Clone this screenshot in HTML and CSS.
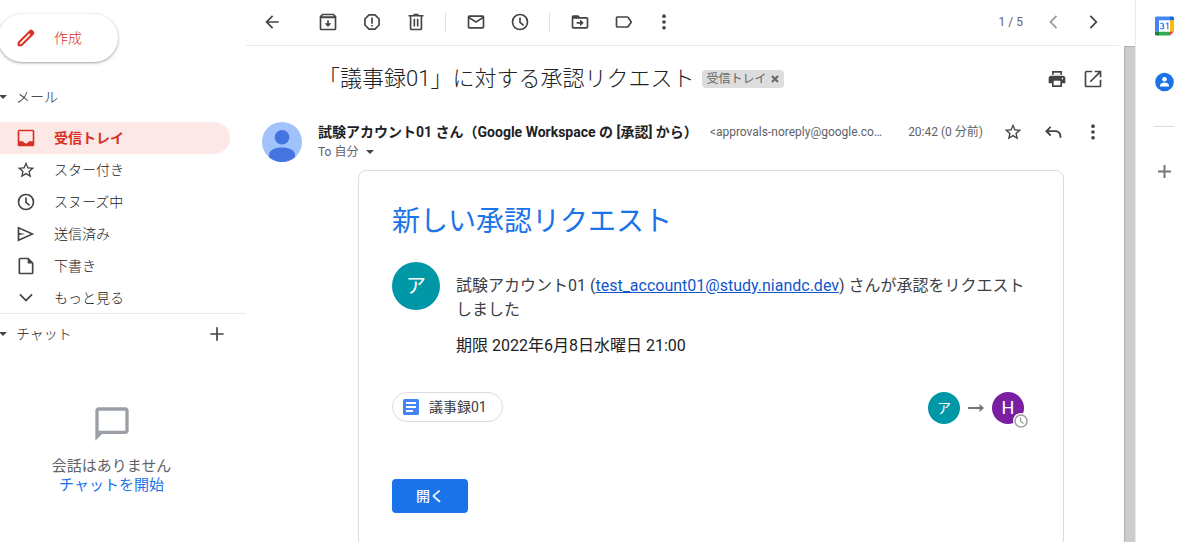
FILE: index.html
```html
<!DOCTYPE html>
<html lang="ja">
<head>
<meta charset="utf-8">
<meta name="viewport" content="width=device-width, initial-scale=1">
<title>「議事録01」に対する承認リクエスト</title>
<link rel="stylesheet" href="styles.css">
</head>
<body>
<svg class="sprite" aria-hidden="true">
  <symbol id="i-star" viewBox="0 0 24 24"><path d="M22 9.24l-7.19-.62L12 2 9.19 8.63 2 9.24l5.46 4.73L5.82 21 12 17.27 18.18 21l-1.63-7.03L22 9.24zM12 15.4l-3.76 2.27 1-4.28-3.32-2.88 4.38-.38L12 6.1l1.71 4.04 4.38.38-3.32 2.88 1 4.28L12 15.4z"/></symbol>
  <symbol id="i-clock" viewBox="0 0 24 24"><path d="M12 2a10 10 0 1 0 0 20 10 10 0 0 0 0-20zm0 18a8 8 0 1 1 0-16 8 8 0 0 1 0 16zM13 6.500h-2V13l4.700 3.700 1.200-1.500L13 12z"/></symbol>
  <symbol id="i-more" viewBox="0 0 24 24"><circle cx="12" cy="5" r="2.200"/><circle cx="12" cy="12" r="2.200"/><circle cx="12" cy="19" r="2.200"/></symbol>
  <symbol id="i-plus" viewBox="0 0 24 24"><path d="M20 13h-7v7h-2v-7H4v-2h7V4h2v7h7z"/></symbol>
</svg>
<div class="app">
  <aside class="sidebar">
    <button class="compose" type="button">
      <svg class="icon" viewBox="0 0 24 24" aria-hidden="true"><path fill-rule="evenodd" d="M2 22v-5L16.300 2.700a2.500 2.500 0 0 1 3.500 0l1.500 1.500a2.500 2.500 0 0 1 0 3.500L7 22zm2.500-2.500H6L17.300 8.200l-1.500-1.500L4.500 18z"/></svg>
      作成
    </button>
    <button class="section-head" type="button"><span class="caret"></span>メール</button>
    <nav class="folders">
      <a class="folder active" href="#"><svg class="icon" viewBox="0 0 24 24" aria-hidden="true"><path fill-rule="evenodd" d="M4 2h16a2 2 0 0 1 2 2v16a2 2 0 0 1-2 2H4a2 2 0 0 1-2-2V4a2 2 0 0 1 2-2zm0 2v12h4.500c.6 1.500 2 2.500 3.500 2.500s2.900-1 3.500-2.500H20V4z"/></svg>受信トレイ</a>
      <a class="folder" href="#"><svg class="icon" aria-hidden="true"><use href="#i-star"/></svg>スター付き</a>
      <a class="folder" href="#"><svg class="icon" aria-hidden="true"><use href="#i-clock"/></svg>スヌーズ中</a>
      <a class="folder" href="#"><svg class="icon" viewBox="0 0 24 24" aria-hidden="true"><path fill-rule="evenodd" d="M2 3l20 9-20 9zm2 3v4.800l7 1.200-7 1.200V18l13.500-6z"/></svg>送信済み</a>
      <a class="folder" href="#"><svg class="icon" viewBox="0 0 24 24" aria-hidden="true"><path fill-rule="evenodd" d="M5 2h10l6 6v12a2 2 0 0 1-2 2H5a2 2 0 0 1-2-2V4a2 2 0 0 1 2-2zm0 2v16h14V9h-5V4z"/></svg>下書き</a>
      <a class="folder" href="#"><svg class="icon" viewBox="0 0 24 24" aria-hidden="true"><path d="M5.400 7L12 13.600 18.600 7 20 8.400l-8 8-8-8z"/></svg>もっと見る</a>
    </nav>
    <section class="chat">
      <div class="chat-head">
        <button class="section-head" type="button"><span class="caret"></span>チャット</button>
        <button class="icon-btn" type="button" aria-label="チャットを追加"><svg class="icon" aria-hidden="true"><use href="#i-plus"/></svg></button>
      </div>
      <div class="chat-empty">
        <svg class="bubble" viewBox="0 0 24 24" aria-hidden="true"><path d="M20 2H4c-1.100 0-2 .9-2 2v18l4-4h14c1.100 0 2-.9 2-2V4c0-1.100-.9-2-2-2zm0 14H4V4h16v12z"/></svg>
        <span>会話はありません</span>
        <a href="#">チャットを開始</a>
      </div>
    </section>
  </aside>

  <main class="main">
    <div class="toolbar">
      <button class="icon-btn wide back" type="button" aria-label="戻る"><svg class="icon" viewBox="0 0 24 24" aria-hidden="true"><path d="M20 11H7.800l5.600-5.600L12 4l-8 8 8 8 1.400-1.400L7.800 13H20z"/></svg></button>
      <button class="icon-btn wide" type="button" aria-label="アーカイブ"><svg class="icon" viewBox="0 0 24 24" aria-hidden="true"><path fill-rule="evenodd" d="M5 2h14l3 3v15a2 2 0 0 1-2 2H4a2 2 0 0 1-2-2V5zm.8 2-1 1h14.400l-1-1zM4 7.500V20h16V7.500zM11 10h2v3.500h3L12 18l-4-4.500h3z"/></svg></button>
      <button class="icon-btn wide" type="button" aria-label="迷惑メールを報告"><svg class="icon" viewBox="0 0 24 24" aria-hidden="true"><path fill-rule="evenodd" d="M8 2.500h8L21.500 8v8L16 21.500H8L2.500 16V8zm.8 2L4.500 8.800v6.400l4.300 4.300h6.400l4.300-4.300V8.800l-4.300-4.300zM11 6.500h2V14h-2zM11 15.500h2v2h-2z"/></svg></button>
      <button class="icon-btn wide" type="button" aria-label="削除"><svg class="icon" viewBox="0 0 24 24" aria-hidden="true"><path fill-rule="evenodd" d="M9 2h6v1.500h6v2h-1.500V20a2 2 0 0 1-2 2h-11a2 2 0 0 1-2-2V5.500H3v-2h6zM6.500 5.500V20h11V5.500zM9 8h2v9.500H9zM13 8h2v9.500h-2z"/></svg></button>
      <span class="sep"></span>
      <button class="icon-btn wide" type="button" aria-label="未読にする"><svg class="icon" viewBox="0 0 24 24" aria-hidden="true"><path fill-rule="evenodd" d="M4 4h16a2 2 0 0 1 2 2v12a2 2 0 0 1-2 2H4a2 2 0 0 1-2-2V6a2 2 0 0 1 2-2zm0 4.200V18h16V8.200l-8 5zM4.300 6l7.700 4.900L19.700 6z"/></svg></button>
      <button class="icon-btn wide" type="button" aria-label="スヌーズ"><svg class="icon" aria-hidden="true"><use href="#i-clock"/></svg></button>
      <span class="sep"></span>
      <button class="icon-btn wide" type="button" aria-label="移動"><svg class="icon" viewBox="0 0 24 24" aria-hidden="true"><path fill-rule="evenodd" d="M4 4h6l2 2h8a2 2 0 0 1 2 2v10a2 2 0 0 1-2 2H4a2 2 0 0 1-2-2V6a2 2 0 0 1 2-2zm0 4v10h16V8zM12 9l4.500 4-4.500 4v-3H8v-2h4z"/></svg></button>
      <button class="icon-btn wide" type="button" aria-label="ラベル"><svg class="icon" viewBox="0 0 24 24" aria-hidden="true"><path fill-rule="evenodd" d="M4 5h12c.7 0 1.300.3 1.600.8L22 12l-4.400 6.200c-.3.500-.9.800-1.600.8H4a2 2 0 0 1-2-2V7a2 2 0 0 1 2-2zm0 2v10h12l3.500-5L16 7z"/></svg></button>
      <button class="icon-btn narrow" type="button" aria-label="その他"><svg class="icon" aria-hidden="true"><use href="#i-more"/></svg></button>
      <span class="count">1 / 5</span>
      <button class="icon-btn" type="button" aria-label="新しい" disabled><svg class="icon" viewBox="0 0 24 24" aria-hidden="true"><path d="M15.500 4L17 5.400 10.400 12l6.600 6.600-1.500 1.400-8-8z"/></svg></button>
      <button class="icon-btn" type="button" aria-label="古い"><svg class="icon" viewBox="0 0 24 24" aria-hidden="true"><path d="M9.500 4L8 5.400l6.600 6.600L8 18.600 9.500 20l8-8z"/></svg></button>
    </div>

    <div class="reader">
      <article class="message">
        <header class="subject">
          <h1>「議事録01」に対する承認リクエスト</h1>
          <span class="label">受信トレイ <button type="button" aria-label="ラベルを削除"><svg viewBox="0 0 8 8" aria-hidden="true"><path d="M1 1l6 6M7 1L1 7"/></svg></button></span>
          <div class="subject-actions">
            <button class="icon-btn narrow" type="button" aria-label="印刷"><svg class="icon" viewBox="0 0 24 24" aria-hidden="true"><path fill-rule="evenodd" d="M18 2.500H6v4.500h12zM19 8H5a3 3 0 0 0-3 3v6h4v4.500h12V17h4v-6a3 3 0 0 0-3-3zM16 19.500H8V14h8zM18.500 12.500a1 1 0 1 1 0-2 1 1 0 0 1 0 2z"/><path fill="#fff" d="M8 4.500h8V7H8z"/></svg></button>
            <button class="icon-btn narrow" type="button" aria-label="新しいウィンドウ"><svg class="icon" viewBox="0 0 24 24" aria-hidden="true"><path d="M20 20H4V4h7V2H4a2 2 0 0 0-2 2v16c0 1.100.9 2 2 2h16a2 2 0 0 0 2-2v-7h-2zM14 2v2h4.600L8 14.600 9.400 16 20 5.400V10h2V2z"/></svg></button>
          </div>
        </header>

        <div class="sender">
          <svg class="portrait" viewBox="0 0 40 40" aria-hidden="true"><circle cx="20" cy="20" r="20" fill="#a1c2fa"/><circle cx="20" cy="15.300" r="7.300" fill="#4374e0"/><path fill="#4374e0" d="M7 35.200V33c0-5 6-7.500 13-7.500S33 28 33 33v2.200A20 20 0 0 1 7 35.200z"/></svg>
          <div class="sender-info">
            <div class="sender-line">
              <strong>試験アカウント01 さん（Google Workspace の [承認] から）</strong>
              <span class="address">&lt;approvals-noreply@google.com&gt;</span>
            </div>
            <button class="recipient" type="button">To 自分 <span class="caret"></span></button>
          </div>
          <time class="time">20:42 (0 分前)</time>
          <div class="sender-actions">
            <button class="icon-btn" type="button" aria-label="スター"><svg class="icon" aria-hidden="true"><use href="#i-star"/></svg></button>
            <button class="icon-btn" type="button" aria-label="返信"><svg class="icon" viewBox="0 0 24 24" aria-hidden="true"><path d="M8.500 5L10 6.400 6.700 10H15c4 0 7 3 7 7v2h-2.200v-2c0-2.800-2-5-4.800-5H6.700l3.300 3.600L8.500 17l-6-6z"/></svg></button>
            <button class="icon-btn" type="button" aria-label="その他"><svg class="icon" aria-hidden="true"><use href="#i-more"/></svg></button>
          </div>
        </div>

        <section class="card">
          <h2>新しい承認リクエスト</h2>
          <div class="request">
            <span class="avatar large">ア</span>
            <div class="request-text">
              <p>試験アカウント01 (<a href="#">test_account01@study.niandc.dev</a>) さんが承認をリクエストしました</p>
              <p class="deadline">期限 2022年6月8日水曜日 21:00</p>
            </div>
          </div>
          <div class="files">
            <a class="file" href="#"><svg viewBox="0 0 16 16" aria-hidden="true"><rect width="16" height="16" rx="1.500" fill="#4285f4"/><path fill="#fff" d="M3 3h10v2H3zM3 7h10v2H3zM3 11h7v2H3z"/></svg>議事録01</a>
            <div class="flow">
              <span class="avatar">ア</span>
              <svg class="arrow" viewBox="0 0 16 16" aria-hidden="true"><path d="M0 7h11.500V4L16 8l-4.500 4V9H0z"/></svg>
              <span class="avatar purple">H<svg class="pending" viewBox="0 0 16 16" aria-hidden="true"><circle cx="8" cy="8" r="8" fill="#fff"/><circle cx="8" cy="8" r="6" fill="none" stroke="#9e9e9e" stroke-width="1.500"/><path d="M7.500 4.500V8l3 2.500" fill="none" stroke="#9e9e9e" stroke-width="1.300"/></svg></span>
            </div>
          </div>
          <button class="open" type="button">開く</button>
        </section>
      </article>
      <div class="scrollbar"></div>
    </div>
  </main>

  <aside class="addons">
    <a href="#" aria-label="カレンダー"><svg class="icon" viewBox="0 0 20 20" aria-hidden="true"><path fill="#4285f4" d="M1 2a1.500 1.500 0 0 1 1.500-1.500H16v4H5v11H1z"/><path fill="#1967d2" d="M16 .5h2.500A1.500 1.500 0 0 1 20 2v2.500h-4z"/><path fill="#fbbc04" d="M16 4.500h4v11h-4z"/><path fill="#34a853" d="M5 15.500h11v4H5z"/><path fill="#188038" d="M1 15.500h4v4H2.500A1.500 1.500 0 0 1 1 18z"/><path fill="#ea4335" d="M16 15.500h4l-4 4z"/><path fill="#fff" d="M5 4.500h11v11H5z"/><path fill="none" stroke="#4285f4" stroke-width="1.300" d="M6.600 8c.3-.8 2.900-1.200 2.900.6 0 1.400-1.500 1.300-1.500 1.300s1.900 0 1.900 1.500c0 2-3.200 1.800-3.500.4M12 8l1.800-1v6.500"/></svg></a>
    <a href="#" aria-label="連絡先"><svg class="icon" viewBox="0 0 20 20" aria-hidden="true"><circle cx="10.500" cy="10" r="9.300" fill="#1a73e8"/><circle cx="10.500" cy="7.300" r="2.300" fill="#fff"/><path fill="#fff" d="M6 14.500v-1c0-2 2.500-3 4.500-3s4.500 1 4.500 3v1z"/></svg></a>
    <hr>
    <button class="add" type="button" aria-label="アドオンを取得"><svg class="icon" viewBox="0 0 20 20" aria-hidden="true"><path d="M9.500 4h2v5.500H17v2h-5.500V17h-2v-5.500H4v-2h5.500z"/></svg></button>
  </aside>
</div>
</body>
</html>
```
FILE: styles.css
```css
* {
  box-sizing: border-box;
}

body {
  margin: 0;
  background: #fff;
  color: #202124;
  font: 14px/20px Roboto, "Noto Sans CJK JP", sans-serif;
}

button {
  display: flex;
  align-items: center;
  padding: 0;
  border: 0;
  background: none;
  color: inherit;
  font: inherit;
  cursor: pointer;
}

a {
  text-decoration: none;
}

h1,
h2,
p {
  margin: 0;
  font-weight: 400;
}

.sprite {
  display: none;
}

.icon {
  display: block;
  flex: none;
  width: 20px;
  height: 20px;
  fill: currentColor;
}

.icon-btn {
  flex: none;
  justify-content: center;
  width: 40px;
  height: 40px;
  color: #444;
}

.icon-btn.wide {
  width: 44px;
}

.icon-btn.narrow {
  width: 36px;
}

.icon-btn:disabled {
  color: #999;
}

.caret {
  flex: none;
  border: 4px solid transparent;
  border-top-color: #444;
  border-bottom: 0;
}

.app {
  display: grid;
  grid-template-columns: 246px minmax(0, 1fr) 51px;
  height: 100vh;
  overflow: hidden;
}

/* Sidebar */

.sidebar {
  padding-top: 14px;
  overflow: hidden;
}

.compose {
  gap: 18px;
  width: 120px;
  height: 48px;
  margin-left: -2px;
  padding-left: 18px;
  border-radius: 24px;
  box-shadow: 0 1px 2px rgba(60, 64, 67, .3), 0 1px 3px 1px rgba(60, 64, 67, .15);
  color: #d93025;
  font-weight: 300;
}

.section-head {
  gap: 9px;
  height: 24px;
  margin: 23px 0 13px -1px;
  font-weight: 300;
}

.folder {
  display: flex;
  align-items: center;
  gap: 18px;
  height: 32px;
  margin-right: 16px;
  padding-left: 16px;
  border-radius: 0 16px 16px 0;
  color: #202124;
  font-weight: 300;
}

.folder .icon {
  color: #444;
}

.folder.active {
  background: #fce8e6;
  color: #d93025;
  font-weight: 700;
}

.folder.active .icon {
  color: #d93025;
}

.chat {
  margin-top: -1px;
  border-top: 1px solid #e8eaed;
}

.chat-head {
  display: flex;
  align-items: center;
  justify-content: space-between;
  height: 40px;
  padding-right: 9px;
}

.chat-head .section-head {
  margin-block: 0;
}

.chat-empty {
  display: flex;
  flex-direction: column;
  align-items: center;
  padding: 50px 23px 0 0;
  color: #5f6368;
  font-size: 15px;
  line-height: 19px;
}

.chat-empty a {
  color: #1a73e8;
}

.bubble {
  width: 40px;
  height: 40px;
  margin-bottom: 13px;
  fill: #9aa0a6;
}

/* Message pane */

.main {
  display: flex;
  flex-direction: column;
  min-width: 0;
  min-height: 0;
}

.toolbar {
  display: flex;
  align-items: center;
  height: 46px;
  margin-right: 16px;
  padding: 0 6px 1px 4px;
  border-bottom: 1px solid #e8eaed;
}

.back {
  margin-right: 12px;
}

.sep {
  width: 1px;
  height: 20px;
  margin: 0 8px 0 7px;
  background: #e4e4e4;
}

.count {
  margin: 0 10px 0 auto;
  color: #5f6368;
  font-size: 12px;
}

.reader {
  display: flex;
  flex: 1;
  min-height: 0;
}

.message {
  flex: 1;
  min-width: 0;
  padding: 13px 11px 0 16px;
}

.scrollbar {
  width: 11px;
  border: 1px solid #b3b3b3;
  border-width: 1px 0 0 1px;
  background: #ccc;
}

.subject {
  display: flex;
  align-items: center;
  height: 40px;
  padding: 0 2px 0 56px;
}

.subject h1 {
  font-size: 22px;
  font-weight: 300;
  line-height: 28px;
}

.label {
  display: flex;
  align-items: center;
  gap: 5px;
  height: 18px;
  margin-left: 8px;
  padding: 0 5px 0 4px;
  border-radius: 4px;
  background: #ddd;
  color: #666;
  font-size: 12px;
}

.label svg {
  display: block;
  width: 8px;
  height: 8px;
  fill: none;
  stroke: #666;
  stroke-width: 2;
}

.subject-actions {
  display: flex;
  margin-left: auto;
}

.sender {
  display: flex;
  align-items: flex-start;
  margin-top: 23px;
}

.portrait {
  flex: none;
  width: 40px;
  height: 40px;
  margin-right: 16px;
}

.sender-info {
  flex: 1;
  min-width: 0;
}

.sender-line {
  display: flex;
  gap: 12px;
  white-space: nowrap;
}

.address {
  flex: 0 1 176px;
  overflow: hidden;
  color: #5f6368;
  font-size: 12px;
  text-overflow: ellipsis;
}

.recipient {
  gap: 8px;
  color: #5f6368;
  font-size: 12px;
}

.time {
  margin: 0 10px 0 14px;
  color: #5f6368;
  font-size: 12px;
  white-space: nowrap;
}

.sender-actions {
  display: flex;
}

.sender-actions .icon-btn {
  height: 20px;
}

/* Approval card */

.card {
  margin: 8px 49px 0 96px;
  padding: 31px 33px 34px;
  border: 1px solid #dadce0;
  border-radius: 8px;
}

.card h2 {
  color: #1a73e8;
  font-size: 28px;
  line-height: 40px;
}

.request {
  display: flex;
  gap: 16px;
  margin-top: 20px;
}

.avatar {
  position: relative;
  display: flex;
  flex: none;
  align-items: center;
  justify-content: center;
  width: 32px;
  height: 32px;
  border-radius: 50%;
  background: #0097a7;
  color: #fff;
  font-size: 14px;
}

.avatar.large {
  width: 48px;
  height: 48px;
  font-size: 20px;
}

.avatar.purple {
  background: #7b1fa2;
  font-size: 18px;
}

.request-text {
  padding-top: 12px;
  color: #3c4043;
  font-size: 16px;
  line-height: 24px;
}

.request-text a {
  color: #15c;
  text-decoration: underline;
}

.deadline {
  margin-top: 12px;
  color: #202124;
}

.files {
  display: flex;
  align-items: flex-start;
  justify-content: space-between;
  margin-top: 34px;
}

.file {
  display: flex;
  align-items: center;
  gap: 10px;
  height: 30px;
  padding: 0 15px 0 10px;
  border: 1px solid #dadce0;
  border-radius: 15px;
  color: #3c4043;
}

.file svg {
  width: 16px;
  height: 16px;
}

.flow {
  display: flex;
  align-items: center;
  gap: 8px;
  margin-right: 6px;
}

.arrow {
  width: 16px;
  height: 16px;
  fill: #757575;
}

.pending {
  position: absolute;
  right: -5px;
  bottom: -5px;
  width: 16px;
  height: 16px;
}

.open {
  justify-content: center;
  height: 34px;
  margin-top: 55px;
  padding: 0 24px;
  border-radius: 4px;
  background: #1a73e8;
  color: #fff;
  font-weight: 500;
}

/* Add-on strip */

.addons {
  display: flex;
  flex-direction: column;
  align-items: center;
  padding: 16px 0 0 5px;
  border-left: 1px solid #e8eaed;
}

.addons a + a {
  margin-top: 36px;
}

.addons hr {
  width: 20px;
  margin: 34px 0;
  border: 0;
  border-top: 1px solid #dadce0;
}

.add {
  color: #777;
}
```
